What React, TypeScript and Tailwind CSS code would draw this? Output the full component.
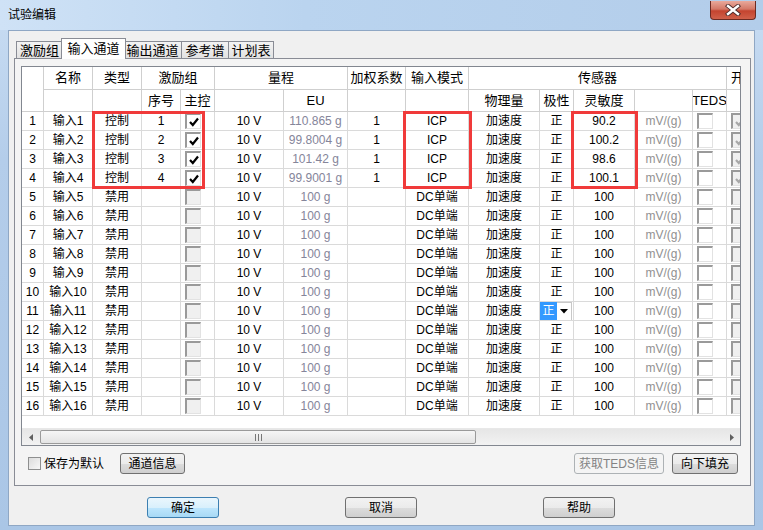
import React from 'react';

const FONT = "font-['Liberation_Sans','Noto_Sans_CJK_SC',sans-serif]";

type Row = {
  n: number;
  type: string;
  seq: string;
  ctl: boolean;
  eu: string;
  weight: string;
  mode: string;
  sens: string;
};

const EU4 = ['110.865 g', '99.8004 g', '101.42 g', '99.9001 g'];
const SENS4 = ['90.2', '100.2', '98.6', '100.1'];

const rows: Row[] = Array.from({ length: 16 }, (_, i) => {
  const ctl = i < 4;
  return {
    n: i + 1,
    type: ctl ? '控制' : '禁用',
    seq: ctl ? String(i + 1) : '',
    ctl,
    eu: ctl ? EU4[i] : '100 g',
    weight: ctl ? '1' : '',
    mode: ctl ? 'ICP' : 'DC单端',
    sens: ctl ? SENS4[i] : '100',
  };
});

const Check = ({ color }: { color: string }) => (
  <svg width="12" height="12" viewBox="0 0 12 12">
    <polyline points="2,6 4.8,9 10,2.5" fill="none" stroke={color} strokeWidth="2.2" />
  </svg>
);

// sunken classic checkbox
const Box = ({ fill, checked, disabled }: { fill: 'white' | 'gray'; checked?: boolean; disabled?: boolean }) => (
  <div
    className={`w-[16px] h-[16px] flex items-center justify-center border-t-2 border-l-2 border-t-[#9a9a9a] border-l-[#9a9a9a] border-r border-b border-r-[#e2e2e2] border-b-[#e2e2e2] ${
      fill === 'white' ? 'bg-white' : 'bg-[#f0f0f0]'
    }`}
  >
    {checked && <Check color={disabled ? '#a8a8a8' : '#000'} />}
  </div>
);

const Cell = ({ children, className = '' }: { children?: React.ReactNode; className?: string }) => (
  <div
    className={`flex items-center justify-center overflow-hidden whitespace-nowrap border-r border-b border-r-[#dadada] border-b-[#dadada] ${className}`}
  >
    {children}
  </div>
);

const Head = ({ children, className = '' }: { children?: React.ReactNode; className?: string }) => (
  <div
    className={`flex items-center justify-center overflow-hidden whitespace-nowrap border-r border-b border-r-[#cfcfcf] border-b-[#cfcfcf] text-[13px] ${className}`}
  >
    {children}
  </div>
);

const Grid = () => (
  <div className="relative w-[720px] h-[380px] border border-[#828790] bg-white flex flex-col overflow-hidden">
    <div className="flex-1 overflow-hidden">
      <div className="grid w-[739px] grid-cols-[22px_49px_49px_39px_34px_69px_64px_58px_63px_71px_34px_61px_58px_34px_34px] grid-rows-[23px_22px_repeat(16,19px)] text-[12px] text-black">
        {/* header row 1 */}
        <Head className="row-span-2 border-r-[#a0a0a0] border-b-[#a0a0a0]" />
        <Head>名称</Head>
        <Head>类型</Head>
        <Head className="col-span-2">激励组</Head>
        <Head className="col-span-2">量程</Head>
        <Head>加权系数</Head>
        <Head>输入模式</Head>
        <Head className="col-span-5">传感器</Head>
        <Head className="justify-start pl-[4px]">开</Head>
        {/* header row 2 */}
        <Head className="border-b-[#a0a0a0]" />
        <Head className="border-b-[#a0a0a0]" />
        <Head className="border-b-[#a0a0a0]">序号</Head>
        <Head className="border-b-[#a0a0a0]">主控</Head>
        <Head className="border-b-[#a0a0a0]" />
        <Head className="border-b-[#a0a0a0]">EU</Head>
        <Head className="border-b-[#a0a0a0]" />
        <Head className="border-b-[#a0a0a0]" />
        <Head className="border-b-[#a0a0a0]">物理量</Head>
        <Head className="border-b-[#a0a0a0]">极性</Head>
        <Head className="border-b-[#a0a0a0]">灵敏度</Head>
        <Head className="border-b-[#a0a0a0]" />
        <Head className="border-b-[#a0a0a0] text-[12px]">TEDS</Head>
        <Head className="border-b-[#a0a0a0]" />
        {rows.map((r) => (
          <React.Fragment key={r.n}>
            <Cell className="border-r-[#a0a0a0]">{r.n}</Cell>
            <Cell>输入{r.n}</Cell>
            <Cell>{r.type}</Cell>
            <Cell>{r.seq}</Cell>
            <Cell className="justify-start pl-[4px]">
              <Box fill={r.ctl ? 'white' : 'gray'} checked={r.ctl} />
            </Cell>
            <Cell>10 V</Cell>
            <Cell className="text-[#85859a]">{r.eu}</Cell>
            <Cell>{r.weight}</Cell>
            <Cell>{r.mode}</Cell>
            <Cell>加速度</Cell>
            {r.n === 11 ? (
              <Cell className="justify-start items-stretch">
                <div className="w-[17px] bg-[#3399ff] text-white flex items-center justify-center">正</div>
                <div className="w-[15px] border-t border-r border-[#c8c8c8] flex items-center justify-center">
                  <svg width="8" height="5" viewBox="0 0 8 5">
                    <polygon points="0,0 8,0 4,4.5" fill="#000" />
                  </svg>
                </div>
              </Cell>
            ) : (
              <Cell>正</Cell>
            )}
            <Cell>{r.sens}</Cell>
            <Cell className="text-[#909090]">mV/(g)</Cell>
            <Cell className="justify-start pl-[4px]">
              <Box fill="white" />
            </Cell>
            <Cell className="justify-start pl-[4px]">
              <Box fill="gray" checked={r.ctl} disabled />
            </Cell>
          </React.Fragment>
        ))}
      </div>
    </div>
    {/* horizontal scrollbar */}
    <div className="h-[17px] flex items-stretch bg-[linear-gradient(to_bottom,#e6e6e6,#f2f2f2)] border-t border-t-[#e8e8e8]">
      <div className="w-[17px] flex items-center justify-center">
        <svg width="4" height="7" viewBox="0 0 4 7">
          <polygon points="4,0 4,7 0,3.5" fill="#606060" />
        </svg>
      </div>
      <div className="ml-[1px] w-[436px] my-[1px] rounded-[2px] border border-[#9a9a9a] bg-[linear-gradient(to_bottom,#f6f6f6,#e4e4e4)] flex items-center justify-center">
        <svg width="7" height="7" viewBox="0 0 7 7">
          <line x1="0.5" y1="0" x2="0.5" y2="7" stroke="#777" />
          <line x1="3.5" y1="0" x2="3.5" y2="7" stroke="#777" />
          <line x1="6.5" y1="0" x2="6.5" y2="7" stroke="#777" />
        </svg>
      </div>
      <div className="flex-1" />
      <div className="w-[17px] flex items-center justify-center">
        <svg width="4" height="7" viewBox="0 0 4 7">
          <polygon points="0,0 0,7 4,3.5" fill="#606060" />
        </svg>
      </div>
    </div>
    {/* highlight frames */}
    <div className="absolute left-[70px] top-[44px] w-[113px] h-[78px] border-[3px] border-[#f03a3a]" />
    <div className="absolute left-[381px] top-[44px] w-[69px] h-[78px] border-[3px] border-[#f03a3a]" />
    <div className="absolute left-[549px] top-[44px] w-[67px] h-[78px] border-[3px] border-[#f03a3a]" />
  </div>
);

const Button = ({
  children,
  className = '',
  variant = 'normal',
}: {
  children: React.ReactNode;
  className?: string;
  variant?: 'normal' | 'default' | 'disabled';
}) => {
  const look =
    variant === 'default'
      ? 'border-[#3c7fb1] bg-[linear-gradient(to_bottom,#eaf6fd_0%,#d9f0fc_50%,#bee6fd_51%,#a7d9f5_100%)] text-black'
      : variant === 'disabled'
      ? 'border-[#adb2b5] bg-[#f4f4f4] text-[#838383]'
      : 'border-[#707070] bg-[linear-gradient(to_bottom,#f2f2f2_0%,#ebebeb_50%,#dddddd_51%,#cfcfcf_100%)] text-black';
  return (
    <div className={`h-[21px] rounded-[3px] border flex items-center justify-center text-[12px] leading-none ${look} ${className}`}>
      {children}
    </div>
  );
};

const tabs = ['激励组', '输入通道', '输出通道', '参考谱', '计划表'];
const tabW = ['w-[47px]', 'w-[65px]', 'w-[59px]', 'w-[48px]', 'w-[46px]'];

export default function App() {
  return (
    <div className={`w-[763px] h-[530px] flex flex-col bg-[linear-gradient(to_bottom,#c9ddf3,#b4cdea_30%,#aac6e6)] ${FONT}`}>
      {/* title bar */}
      <div className="h-[30px] flex items-start justify-between bg-[linear-gradient(to_right,#cfe2f6,#bad4ef_40%,#b3cdea)]">
        <div className="pl-[8px] pt-[8px] text-[12px] leading-[14px] text-black">试验编辑</div>
        <div className="mt-[1px] mr-[7px] w-[46px] h-[19px] rounded-b-[4px] border border-t-0 border-[#6b2a22] bg-[linear-gradient(to_bottom,#e9a99b_0%,#d47867_45%,#c4442f_55%,#d0604a_100%)] flex items-center justify-center">
          <svg width="16" height="12" viewBox="0 0 16 12">
            <path d="M3 2 L13 10 M13 2 L3 10" stroke="#4a2a2a" strokeWidth="4.2" strokeLinecap="square" />
            <path d="M3 2 L13 10 M13 2 L3 10" stroke="#ffffff" strokeWidth="2.4" strokeLinecap="square" />
          </svg>
        </div>
      </div>
      {/* client area */}
      <div className="mx-[8px] mb-[4px] flex-1 border border-[#8fa7c4] bg-[#f0f0f0] flex flex-col">
        <div className="ml-[5px] mt-[7px] w-[737px] flex flex-col">
          <div className="h-[20px] flex items-end pl-[2px] relative z-10">
            {tabs.map((t, i) =>
              i === 1 ? (
                <div
                  key={t}
                  className={`${tabW[i]} -ml-[2px] -mr-[2px] -mb-px h-[21px] bg-white border border-b-0 border-[#898c95] flex items-start justify-center pt-[2px] text-[13px] leading-[16px] relative z-10`}
                >
                  {t}
                </div>
              ) : (
                <div
                  key={t}
                  className={`${tabW[i]} ${i > 1 ? '-ml-px' : ''} h-[17px] bg-[linear-gradient(to_bottom,#f3f3f3,#e2e2e2)] border border-b-0 border-[#898c95] flex items-center justify-center text-[13px] leading-[15px]`}
                >
                  {t}
                </div>
              )
            )}
          </div>
          <div className="h-[428px] border border-[#898c95] bg-[#f4f4f4] flex flex-col">
            <div className="pl-[6px] pt-[7px]">
              <Grid />
            </div>
            <div className="mt-[7px] h-[21px] flex items-center pl-[13px] pr-[12px] text-[12px]">
              <div className="w-[13px] h-[13px] border border-[#8e8f8f] bg-[linear-gradient(135deg,#dcdcdc,#f8f8f8)]" />
              <span className="ml-[3px] leading-none">保存为默认</span>
              <Button className="ml-[16px] w-[65px]">通道信息</Button>
              <Button className="ml-auto w-[90px]" variant="disabled">
                获取TEDS信息
              </Button>
              <Button className="ml-[8px] w-[66px]">向下填充</Button>
            </div>
          </div>
        </div>
        <div className="mt-[11px] pl-[138px] flex gap-[126px]">
          <Button className="w-[72px]" variant="default">
            确定
          </Button>
          <Button className="w-[72px]">取消</Button>
          <Button className="w-[72px]">帮助</Button>
        </div>
      </div>
    </div>
  );
}
